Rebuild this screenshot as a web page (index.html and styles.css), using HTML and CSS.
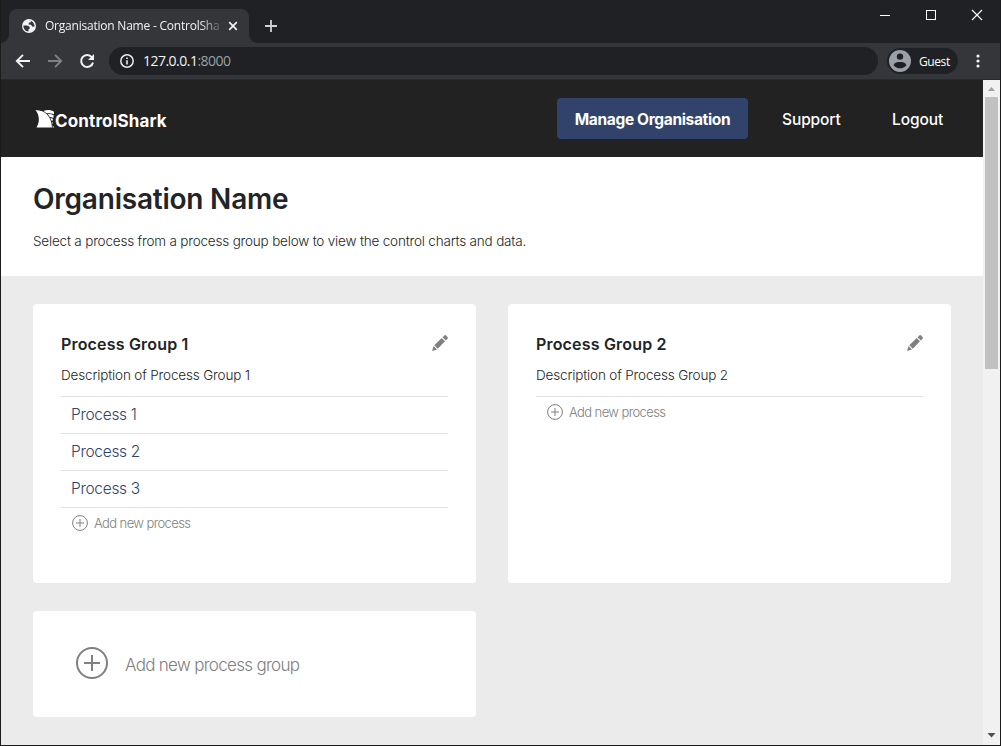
FILE: index.html
```html
<!DOCTYPE html>
<html lang="en">
<head>
<meta charset="utf-8">
<title>Organisation Name - ControlShark</title>
<link rel="stylesheet" href="styles.css">
</head>
<body>
<div class="window">
  <div class="tabstrip">
    <div class="tab">
      <svg class="globe" width="14" height="14" viewBox="0 0 14 14"><circle cx="7" cy="7" r="7" fill="#f1f3f4"/><path d="M1.400 6.600H4.800L7.300 7.600 8 9.300 6.500 10.300V12.600C3.500 12.500 1.200 10 1.400 6.600ZM6.300 1.500 9 1.700 8.700 3.200 6.800 3.800 6.600 5.400 9 5.700 10.500 7.700 12.600 7.400C12.600 4 9.800 1.200 6.300 1.500Z" fill="#35363a"/></svg>
      <span class="tab-title">Organisation Name - ControlSha</span>
      <svg class="tab-close" width="10" height="10" viewBox="0 0 10 10"><path d="M1.200 1.200 8.800 8.800M8.800 1.200 1.200 8.800" stroke="#f1f3f4" stroke-width="1.700"/></svg>
    </div>
    <svg class="new-tab" width="12" height="12" viewBox="0 0 12 12"><path d="M6 0V12M0 6H12" stroke="#d0d1d3" stroke-width="1.800"/></svg>
    <div class="controls">
      <svg width="10" height="10" viewBox="0 0 10 10"><path d="M0 5.500H10" stroke="#fff"/></svg>
      <svg width="10" height="10" viewBox="0 0 10 10"><rect x=".5" y=".5" width="9" height="9" fill="none" stroke="#fff"/></svg>
      <svg width="10" height="10" viewBox="0 0 10 10"><path d="M0 0 10 10M10 0 0 10" stroke="#fff" stroke-width="1.200"/></svg>
    </div>
  </div>
  <div class="toolbar">
    <svg width="16" height="16" viewBox="0 0 16 16" fill="none" stroke="#f1f3f4" stroke-width="1.900"><path d="M15 8H2.500M8 1.800 1.800 8 8 14.200"/></svg>
    <svg width="16" height="16" viewBox="0 0 16 16" fill="none" stroke="#808184" stroke-width="1.900"><path d="M1 8H13.500M8 1.800 14.200 8 8 14.200"/></svg>
    <svg width="16" height="16" viewBox="0 0 16 16"><path d="M12.900 4.300A6 6 0 1 0 14 9.400" fill="none" stroke="#f1f3f4" stroke-width="2"/><path d="M15 1V7H9Z" fill="#f1f3f4"/></svg>
    <div class="address">
      <svg width="14" height="14" viewBox="0 0 14 14"><circle cx="7" cy="7" r="6.200" fill="none" stroke="#e8eaed" stroke-width="1.500"/><path d="M7 6.200V10.500M7 3.500V5" stroke="#e8eaed" stroke-width="1.600"/></svg>
      <span class="url">127.0.0.1<span class="port">:8000</span></span>
    </div>
    <div class="profile">
      <svg width="22" height="22" viewBox="0 0 22 22"><circle cx="11" cy="11" r="11" fill="#9aa0a6"/><circle cx="11" cy="6.600" r="3.200" fill="#202124"/><path d="M4.500 15.200C5.500 12.500 8.300 12 11 12S16.500 12.500 17.500 15.200C14.500 19.300 7.500 19.300 4.500 15.200Z" fill="#202124"/></svg>
      <span>Guest</span>
    </div>
    <svg class="more" width="4" height="14" viewBox="0 0 4 14" fill="#f1f3f4"><circle cx="2" cy="2" r="1.600"/><circle cx="2" cy="7" r="1.600"/><circle cx="2" cy="12" r="1.600"/></svg>
  </div>
  <div class="viewport">
    <div class="page">
      <header class="site-header">
        <div class="logo">
          <svg width="19" height="18" viewBox="0 0 19 18"><path d="M-.5 0C9.500.3 15.500 6.500 16 17.500H.5C4 12 3.500 5 -.5 0Z" fill="#fff"/><path d="M7.500 .9C11-.3 15-.3 18 1.800V4.300C15.500 3.200 13 3.100 10.600 3.200ZM11.800 4.100C13.800 3.900 15.900 4.300 17.800 5.400L17.200 7.900C16 7.200 15 7 13.800 7ZM14.300 8 17 8.700 16.600 10.800 15.400 10.500ZM15.800 11.600 16.500 12 16.600 14 16.300 14.100ZM16.600 15.300 18.300 17.500H16.800Z" fill="#fff"/></svg>
          <span>ControlShark</span>
        </div>
        <nav class="nav">
          <a class="button">Manage Organisation</a>
          <a class="support">Support</a>
          <a class="logout">Logout</a>
        </nav>
      </header>
      <section class="intro">
        <h1>Organisation Name</h1>
        <p>Select a process from a process group below to view the control charts and data.</p>
      </section>
      <main class="groups">
        <article class="card">
          <div class="card-head"><h2>Process Group 1</h2>
            <svg class="pencil" width="16" height="16" viewBox="0 0 16 16" fill="#808080"><path d="M0 16 1.600 11 5 14.400ZM2.300 10.200 9.700 3 13 6.300 5.800 13.700ZM10.600 2.200 12.600.3Q13.200-.2 13.800.3L15.700 2.200Q16.300 2.900 15.700 3.500L13.900 5.400Z"/></svg>
          </div>
          <p class="description">Description of Process Group 1</p>
          <ul>
            <li>Process 1</li>
            <li>Process 2</li>
            <li>Process 3</li>
          </ul>
          <div class="add-process"><svg width="16" height="16" viewBox="0 0 16 16" fill="none" stroke="#808080"><circle cx="8" cy="8" r="7.400"/><path d="M8 4V12M4 8H12"/></svg><span>Add new process</span></div>
        </article>
        <article class="card">
          <div class="card-head"><h2>Process Group 2</h2>
            <svg class="pencil" width="16" height="16" viewBox="0 0 16 16" fill="#808080"><path d="M0 16 1.600 11 5 14.400ZM2.300 10.200 9.700 3 13 6.300 5.800 13.700ZM10.600 2.200 12.600.3Q13.200-.2 13.800.3L15.700 2.200Q16.300 2.900 15.700 3.500L13.900 5.400Z"/></svg>
          </div>
          <p class="description">Description of Process Group 2</p>
          <ul></ul>
          <div class="add-process"><svg width="16" height="16" viewBox="0 0 16 16" fill="none" stroke="#808080"><circle cx="8" cy="8" r="7.400"/><path d="M8 4V12M4 8H12"/></svg><span>Add new process</span></div>
        </article>
        <div class="card add-group">
          <svg width="32" height="32" viewBox="0 0 32 32" fill="none" stroke="#808080" stroke-width="2"><circle cx="16" cy="16" r="15"/><path d="M16 8V24M8 16H24"/></svg>
          <span>Add new process group</span>
        </div>
      </main>
    </div>
    <div class="scrollbar">
      <svg width="9" height="5" viewBox="0 0 9 5"><path d="M1 5 4.500 1 8 5Z" fill="#a3a3a3"/></svg>
      <div class="thumb"></div>
      <svg class="down" width="9" height="5" viewBox="0 0 9 5"><path d="M.5 0H8.500L4.500 4.500Z" fill="#505050"/></svg>
    </div>
  </div>
</div>
</body>
</html>
```
FILE: styles.css
```css
* { box-sizing: border-box; }
body { margin: 0; }
svg { display: block; flex: none; overflow: visible; }
h1, h2, p, ul { margin: 0; padding: 0; }

.window {
  width: 1001px;
  height: 746px;
  display: flex;
  flex-direction: column;
  border: solid #1b1b1c;
  border-width: 0 1px 1px;
  overflow: hidden;
  white-space: nowrap;
  font-family: "Open Sans", "Noto Sans", sans-serif;
}
.tabstrip { height: 43px; flex: none; display: flex; background: #202124; padding: 9px 0 0 8px; }
.tab {
  position: relative;
  width: 240px;
  height: 34px;
  display: flex;
  align-items: center;
  padding-left: 13px;
  background: #35363a;
  border-radius: 8px 8px 0 0;
}
.tab::before, .tab::after {
  content: "";
  position: absolute;
  bottom: 0;
  width: 8px;
  height: 8px;
}
.tab::before { left: -8px; background: radial-gradient(circle at 0 0, transparent 7.5px, #35363a 8px); }
.tab::after { right: -8px; background: radial-gradient(circle at 100% 0, transparent 7.5px, #35363a 8px); }
.tab-title {
  width: 176px;
  margin-left: 9px;
  color: #f1f3f4;
  font-size: 12px;
  line-height: 18px;
  letter-spacing: -0.22px;
  -webkit-mask-image: linear-gradient(to right, #000 154px, transparent 180px);
  mask-image: linear-gradient(to right, #000 154px, transparent 180px);
}
.tab-close { margin-left: 7px; }
.new-tab { margin: 11px 0 0 16px; }
.controls { display: flex; gap: 36px; margin: 1px 18px 0 auto; }

.toolbar {
  height: 37px;
  flex: none;
  display: flex;
  align-items: center;
  gap: 16px;
  padding: 0 19px 0 14px;
  background: #35363a;
  border-bottom: 1px solid #28292b;
}
.address {
  width: 769px;
  height: 28px;
  display: flex;
  align-items: center;
  gap: 9px;
  margin-left: -2px;
  padding-left: 11px;
  border-radius: 14px;
  background: #202124;
}
.url { margin-top: -1px; color: #f1f3f4; font-size: 14px; letter-spacing: -0.52px; }
.port { color: #9aa0a6; }
.profile {
  width: 71px;
  height: 26px;
  display: flex;
  align-items: center;
  gap: 8px;
  margin-left: -7px;
  padding-left: 2px;
  border-radius: 13px;
  background: #202124;
  color: #fff;
  font-size: 12px;
  letter-spacing: -0.4px;
}
.more { margin-left: 2px; }

.viewport { flex: 1; min-height: 0; display: flex; }
.page {
  width: 982px;
  background: #ebebeb;
  color: #222426;
  font-family: Inter, "Liberation Sans", sans-serif;
}
.site-header {
  height: 77px;
  display: flex;
  align-items: center;
  justify-content: space-between;
  padding: 0 40px 0 35px;
  background: #222;
  color: #fff;
}
.logo { display: flex; align-items: center; font-size: 17px; font-weight: 700; letter-spacing: 0.15px; }
.logo span { padding-top: 4px; }
.nav { display: flex; align-items: center; font-size: 15.5px; font-weight: 500; }
.button {
  width: 191px;
  height: 41px;
  line-height: 43px;
  text-align: center;
  border-radius: 4px;
  background: #31436b;
  font-weight: 700;
  letter-spacing: -0.34px;
}
.support { width: 59px; margin-left: 34px; padding-top: 1px; letter-spacing: -0.1px; }
.logout { width: 51px; margin-left: 51px; padding-top: 1px; letter-spacing: -0.1px; }

.intro { height: 119px; padding: 22px 32px; background: #fff; }
h1 { font-size: 28px; line-height: 40px; font-weight: 600; letter-spacing: -0.22px; }
.intro p { margin-top: 12px; font-size: 13.5px; line-height: 20px; font-weight: 300; letter-spacing: -0.19px; }

.groups {
  display: grid;
  grid-template-columns: 443px 443px;
  grid-template-rows: 279px 106px;
  gap: 28px 32px;
  padding: 28px 32px;
}
.card { padding: 28px; background: #fff; border-radius: 4px; }
.card-head { display: flex; justify-content: space-between; align-items: center; height: 24px; }
h2 { font-size: 16px; line-height: 24px; font-weight: 600; letter-spacing: 0.18px; }
.pencil { margin-top: -2px; }
.description { margin-top: 9px; font-size: 13.5px; line-height: 20px; font-weight: 300; letter-spacing: -0.16px; }
.card ul { margin-top: 11px; border-top: 1px solid #dee2e6; list-style: none; }
.card li {
  height: 37px;
  padding-left: 10px;
  border-bottom: 1px solid #dee2e6;
  color: #31436b;
  font-size: 15.5px;
  line-height: 35px;
  font-weight: 300;
  letter-spacing: -0.3px;
}
.add-process {
  display: flex;
  align-items: center;
  gap: 6px;
  height: 30px;
  padding-left: 11px;
  color: #808080;
  font-size: 13px;
  font-weight: 300;
  letter-spacing: -0.6px;
}
.add-group {
  display: flex;
  align-items: center;
  gap: 17px;
  padding: 0 43px 2px;
  color: #808080;
  font-size: 17px;
  font-weight: 300;
  letter-spacing: -0.7px;
}
.add-group span { padding-top: 4px; }
.scrollbar { width: 17px; display: flex; flex-direction: column; align-items: center; padding: 6px 0 7px; background: #f1f1f1; }
.thumb { width: 13px; height: 272px; margin-top: 6px; background: #c1c1c1; }
.down { margin-top: auto; }
```
